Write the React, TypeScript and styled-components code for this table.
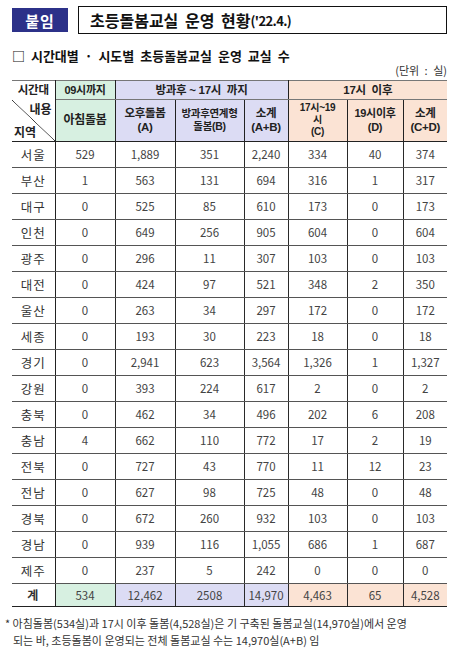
import React from "react";
import styled, { createGlobalStyle } from "styled-components";

const Global = createGlobalStyle`
  html, body { margin: 0; padding: 0; background: #ffffff; }
  body { font-family: "Noto Sans CJK KR", "Noto Sans", sans-serif; color: #222; }
`;

const GREEN = "#d7f0e1";
const LAV = "#dcdcf4";
const PEACH = "#fbe3d4";

type Tone = "none" | "green" | "lav" | "peach";
const toneBg = (t?: Tone) =>
  t === "green" ? GREEN : t === "lav" ? LAV : t === "peach" ? PEACH : "#ffffff";

const Page = styled.div`
  width: 457px;
  box-sizing: border-box;
  padding: 6px 10px 0 12px;
`;

const TitleRow = styled.div`
  display: flex;
  align-items: center;
  gap: 10px;
`;

const Badge = styled.div`
  width: 56px;
  height: 24px;
  background: #2c3189;
  color: #fff;
  font-weight: 700;
  font-size: 15px;
  display: flex;
  align-items: center;
  justify-content: center;
  letter-spacing: 1px;
`;

const TitleBox = styled.div`
  flex: 1;
  height: 28px;
  box-sizing: border-box;
  border: 1px solid #111;
  display: flex;
  align-items: center;
  padding-left: 11px;
  font-weight: 700;
  font-size: 16px;
  color: #111;
  word-spacing: 3px;
`;

const TitleDate = styled.span`
  font-size: 13px;
  letter-spacing: -0.6px;
  word-spacing: 0;
`;

const SectionTitle = styled.div`
  margin-top: 14px;
  font-size: 13px;
  line-height: 16px;
  font-weight: 700;
  color: #111;
  word-spacing: 3px;
`;

const Unit = styled.div`
  text-align: right;
  font-size: 11px;
  line-height: 13px;
  color: #333;
  margin-bottom: 3px;
  word-spacing: 3px;
`;

const Table = styled.table`
  width: 435px;
  border-collapse: collapse;
  table-layout: fixed;
`;

const HeadRow = styled.tr<{ $h: number }>`
  height: ${(p) => p.$h}px;
`;

const HCell = styled.th<{
  $tone?: Tone;
  $size?: number;
  $lh?: number;
  $bottom?: boolean;
  $first?: boolean;
  $last?: boolean;
}>`
  background: ${(p) => toneBg(p.$tone)};
  font-family: "Liberation Sans", "Noto Sans CJK KR", sans-serif;
  font-size: ${(p) => p.$size ?? 11}px;
  font-weight: 700;
  line-height: ${(p) => p.$lh ?? 14}px;
  color: #222;
  padding: 0;
  text-align: center;
  vertical-align: middle;
  border-top: 1px solid #777;
  border-bottom: ${(p) => (p.$bottom === false ? "none" : "1px solid #777")};
  border-left: ${(p) => (p.$first ? "none" : "1px solid #222")};
  border-right: ${(p) => (p.$last ? "none" : "1px solid #222")};
  letter-spacing: -0.3px;
`;

const DiagCell = styled.th`
  padding: 2px 3px 3px 2px;
  border-bottom: 1px solid #222;
  border-right: 1px solid #222;
  background: linear-gradient(
    to top right,
    transparent calc(50% - 0.6px),
    #333 50%,
    transparent calc(50% + 0.6px)
  );
  font-size: 12px;
  font-weight: 700;
  color: #222;
`;

const DiagInner = styled.div`
  height: 36px;
  display: flex;
  flex-direction: column;
  justify-content: space-between;
`;

const DiagTop = styled.span`
  align-self: flex-end;
  line-height: 13px;
`;

const DiagBottom = styled.span`
  align-self: flex-start;
  line-height: 13px;
`;

const SubHead = styled.tr`
  height: 41px;
  & > th {
    border-bottom: 1.5px solid #222;
  }
`;

const DataRow = styled.tr<{ $h: number }>`
  height: ${(p) => p.$h}px;
`;

const Region = styled.td<{ $bold?: boolean }>`
  font-size: ${(p) => (p.$bold ? 12 : 12.5)}px;
  font-weight: ${(p) => (p.$bold ? 700 : 400)};
  color: #333;
  text-align: center;
  padding: 0;
  letter-spacing: 1px;
  border-bottom: 1px solid #555;
  border-right: 1px solid #222;
`;

const Num = styled.td<{ $tone?: Tone; $last?: boolean; $dark?: boolean }>`
  background: ${(p) => toneBg(p.$tone)};
  font-size: 11.5px;
  color: #444;
  text-align: center;
  padding: 0;
  border-bottom: 1px solid ${(p) => (p.$dark ? "#222" : "#555")};
  border-right: ${(p) => (p.$last ? "none" : "1px solid #2a2a2a")};
`;

const TotalRow = styled.tr`
  height: 23px;
  & > td {
    border-top: 1.5px solid #222;
    border-bottom: 1.5px solid #222;
  }
`;

const Note = styled.div`
  margin-top: 8px;
  margin-left: -7px;
  font-size: 11px;
  line-height: 17px;
  color: #333;
  white-space: nowrap;
`;

const NoteLine2 = styled.div`
  padding-left: 8px;
`;

const rows: [string, ...string[]][] = [
  ["서울", "529", "1,889", "351", "2,240", "334", "40", "374"],
  ["부산", "1", "563", "131", "694", "316", "1", "317"],
  ["대구", "0", "525", "85", "610", "173", "0", "173"],
  ["인천", "0", "649", "256", "905", "604", "0", "604"],
  ["광주", "0", "296", "11", "307", "103", "0", "103"],
  ["대전", "0", "424", "97", "521", "348", "2", "350"],
  ["울산", "0", "263", "34", "297", "172", "0", "172"],
  ["세종", "0", "193", "30", "223", "18", "0", "18"],
  ["경기", "0", "2,941", "623", "3,564", "1,326", "1", "1,327"],
  ["강원", "0", "393", "224", "617", "2", "0", "2"],
  ["충북", "0", "462", "34", "496", "202", "6", "208"],
  ["충남", "4", "662", "110", "772", "17", "2", "19"],
  ["전북", "0", "727", "43", "770", "11", "12", "23"],
  ["전남", "0", "627", "98", "725", "48", "0", "48"],
  ["경북", "0", "672", "260", "932", "103", "0", "103"],
  ["경남", "0", "939", "116", "1,055", "686", "1", "687"],
  ["제주", "0", "237", "5", "242", "0", "0", "0"],
];

const total = ["534", "12,462", "2508", "14,970", "4,463", "65", "4,528"];
const totalTones: Tone[] = ["green", "lav", "lav", "lav", "peach", "peach", "peach"];

const widths = [43, 60, 60, 69, 44, 59, 56, 44];

export default function App() {
  return (
    <>
      <Global />
      <Page>
        <TitleRow>
          <Badge>붙임</Badge>
          <TitleBox>
            초등돌봄교실 운영 현황<TitleDate>('22.4.)</TitleDate>
          </TitleBox>
        </TitleRow>
        <SectionTitle>□ 시간대별 · 시도별 초등돌봄교실 운영 교실 수</SectionTitle>
        <Unit>(단위 : 실)</Unit>
        <Table>
          <colgroup>
            {widths.map((w, i) => (
              <col key={i} style={{ width: w }} />
            ))}
          </colgroup>
          <thead>
            <HeadRow $h={19}>
              <HCell $first $bottom={false} $size={11.5}>시간대</HCell>
              <HCell $tone="green" $size={11}>09시까지</HCell>
              <HCell $tone="lav" colSpan={3} $size={11.5}>
                방과후 ~ 17시&nbsp;&nbsp;까지
              </HCell>
              <HCell $tone="peach" colSpan={3} $last $size={11.5}>
                17시&nbsp;&nbsp;이후
              </HCell>
            </HeadRow>
            <SubHead>
              <DiagCell>
                <DiagInner>
                  <DiagTop>내용</DiagTop>
                  <DiagBottom>지역</DiagBottom>
                </DiagInner>
              </DiagCell>
              <HCell $tone="green" $size={12}>아침돌봄</HCell>
              <HCell $tone="lav" $size={11.5}>
                오후돌봄
                <br />
                (A)
              </HCell>
              <HCell $tone="lav" $size={10.5} $lh={13}>
                방과후연계형
                <br />
                돌봄(B)
              </HCell>
              <HCell $tone="lav" $size={11.5}>
                소계
                <br />
                (A+B)
              </HCell>
              <HCell $tone="peach" $size={10} $lh={12}>
                17시~19
                <br />시<br />
                (C)
              </HCell>
              <HCell $tone="peach" $size={11}>
                19시이후
                <br />
                (D)
              </HCell>
              <HCell $tone="peach" $size={11.5} $last>
                소계
                <br />
                (C+D)
              </HCell>
            </SubHead>
          </thead>
          <tbody>
            {rows.map(([name, ...vals]) => (
              <DataRow key={name} $h={26}>
                <Region>{name}</Region>
                {vals.map((v, i) => (
                  <Num key={i} $last={i === vals.length - 1}>
                    {v}
                  </Num>
                ))}
              </DataRow>
            ))}
            <TotalRow>
              <Region $bold>계</Region>
              {total.map((v, i) => (
                <Num key={i} $tone={totalTones[i]} $last={i === total.length - 1} $dark>
                  {v}
                </Num>
              ))}
            </TotalRow>
          </tbody>
        </Table>
        <Note>
          <div>
            * 아침돌봄(534실)과 17시 이후 돌봄(4,528실)은 기 구축된 돌봄교실(14,970실)에서 운영
          </div>
          <NoteLine2>되는 바, 초등돌봄이 운영되는 전체 돌봄교실 수는 14,970실(A+B) 임</NoteLine2>
        </Note>
      </Page>
    </>
  );
}
